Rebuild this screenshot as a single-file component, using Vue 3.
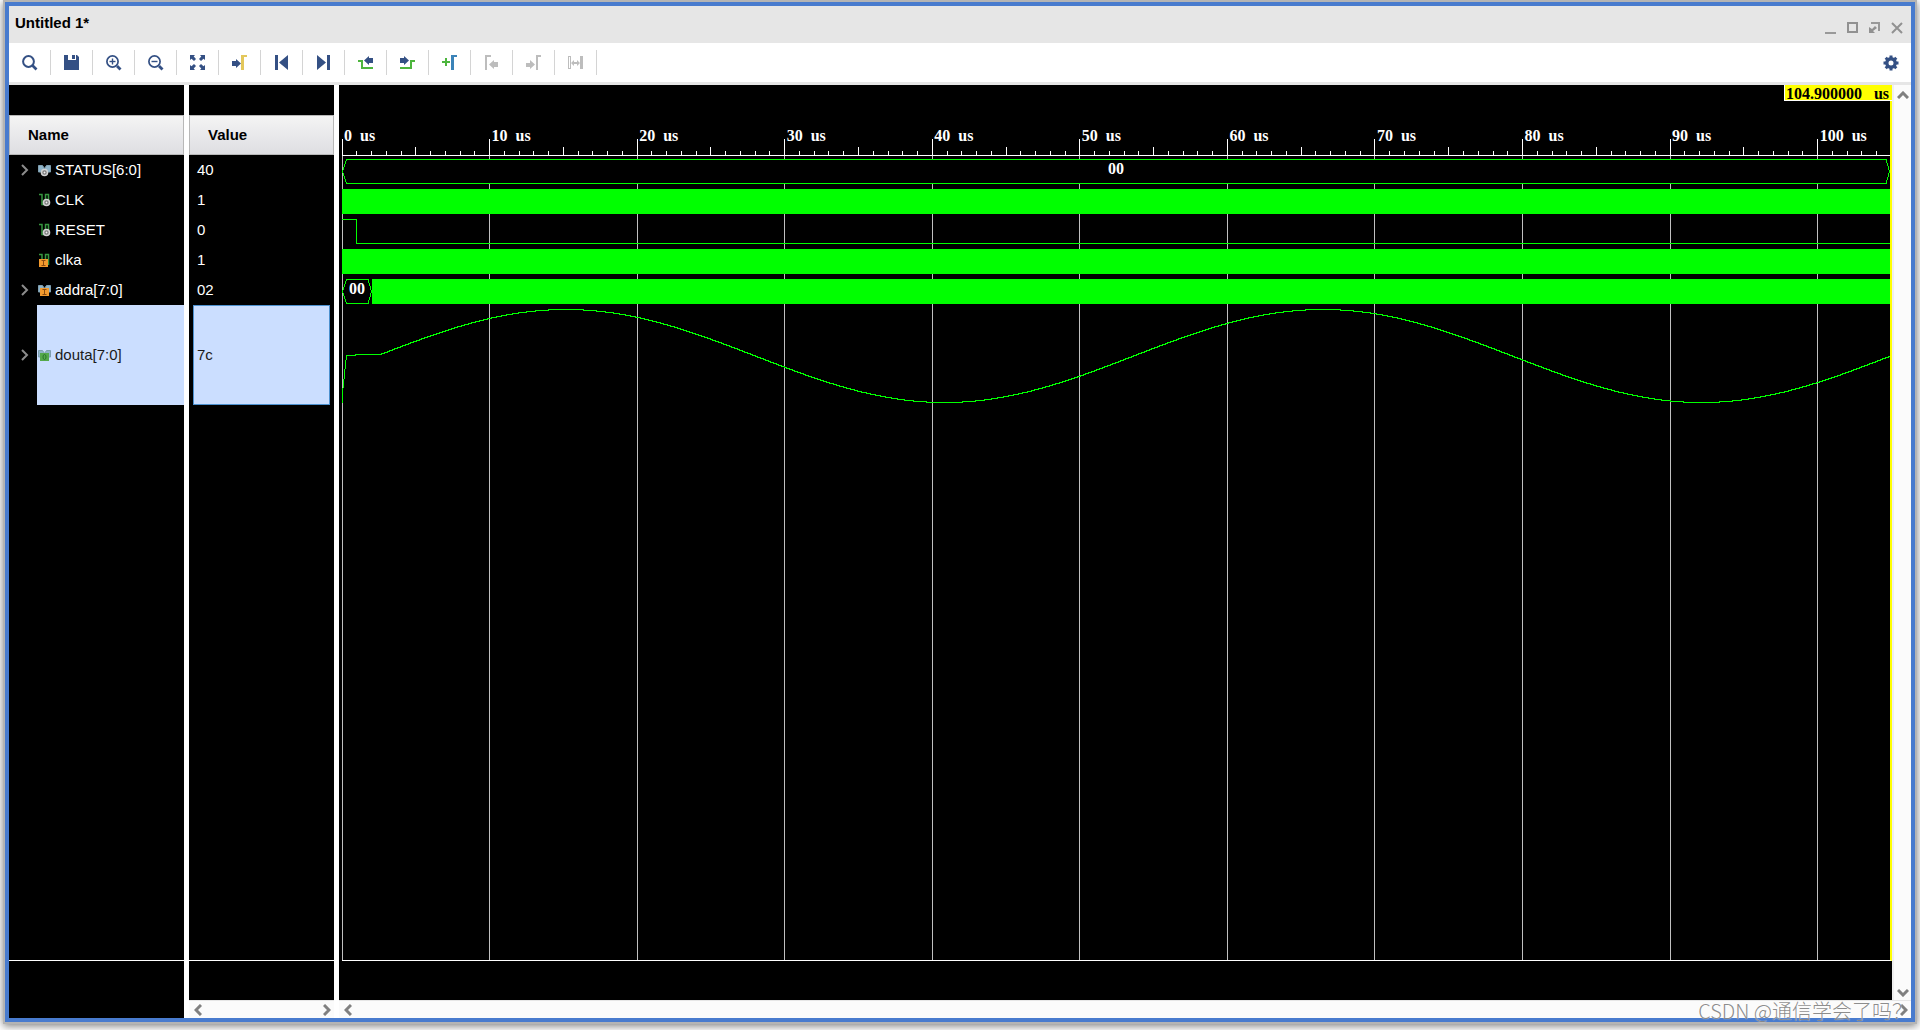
<script setup>
const SPAN = 104.9
const pct = (t) => `${(t / SPAN) * 100}%`

const majors = Array.from({ length: 11 }, (_, i) => i * 10)
const minors = Array.from({ length: 105 }, (_, i) => i).filter((t) => t % 10 !== 0)

const signals = [
  { name: 'STATUS[6:0]', value: '40', icon: 'bus', expand: true },
  { name: 'CLK', value: '1', icon: 'wire' },
  { name: 'RESET', value: '0', icon: 'wire' },
  { name: 'clka', value: '1', icon: 'wire-in' },
  { name: 'addra[7:0]', value: '02', icon: 'bus-in', expand: true },
  { name: 'douta[7:0]', value: '7c', icon: 'bus-out', expand: true, selected: true },
]

const tools = [
  'Search', 'Save', 'Zoom In', 'Zoom Out', 'Zoom Fit', 'Go to Cursor', 'Go to Time 0',
  'Go to Last Time', 'Previous Transition', 'Next Transition', 'Add Marker',
  'Previous Marker', 'Next Marker', 'Swap Cursors',
]

// Analog trace of douta, one sample per plot unit.
const samples = ['0.5,98', '0.5,88', '4.5,50.5', '13,50.5', '14,49.5', '39,49.5']
for (let x = 40; x <= 1548; x += 1) {
  const y = 51 - 46.5 * Math.cos((2 * Math.PI * (x - 224)) / 757)
  samples.push(`${x},${Math.floor(y) + 0.5}`)
}
const analog = samples.join(' ')
</script>

<template>
  <main class="page">
    <section class="window">
      <header class="titlebar">
        <h1>Untitled 1*</h1>
        <div class="controls">
          <button aria-label="Minimize"><svg width="12" height="12"><path d="M0 10h11v2H0z" fill="#999" /></svg></button>
          <button aria-label="Maximize"><svg width="12" height="12"><path d="M1 1h9v9H1z" fill="none" stroke="#919191" stroke-width="2" /></svg></button>
          <button aria-label="Float"><svg width="12" height="12"><path d="M2 1h8v8" fill="none" stroke="#999" stroke-width="2" /><path d="M0 5v6h6L4 9l4-3-2-2-3 3z" fill="#919191" /></svg></button>
          <button aria-label="Close"><svg width="12" height="12"><path d="M1 1l10 10M11 1L1 11" stroke="#919191" stroke-width="2" /></svg></button>
        </div>
      </header>

      <div class="toolbar">
        <button v-for="(tool, i) in tools" :key="tool" class="tool" :aria-label="tool" :disabled="i > 10">
          <svg width="16" height="16" viewBox="0 0 16 16">
            <g v-if="i === 0" fill="none" stroke="#345084">
              <circle cx="6.5" cy="6.5" r="5.4" stroke-width="2" />
              <path d="M10.5 10.5l4 4" stroke-width="2.6" />
            </g>
            <path v-else-if="i === 1" fill="#345084" fill-rule="evenodd" d="M0 0h4v5h8V0h1l2 2v13H0zM8 0h3v4H8z" />
            <g v-else-if="i === 2 || i === 3" fill="none" stroke="#345084">
              <circle cx="6.5" cy="6.5" r="5.6" stroke-width="1.7" />
              <path d="M11 11l3.5 3.5" stroke-width="2.8" />
              <path d="M3.5 6.5h6" stroke-width="1.4" />
              <path v-if="i === 2" d="M6.5 3.5v6" stroke-width="1.4" />
            </g>
            <path v-else-if="i === 4" fill="#345084" d="M0 0h5L3.700 1.500 6 4 4 6 1.500 3.700 0 5zM15 0v5l-1.500-1.300L11 6 9 4l2.300-2.500L10 0zM0 15v-5l1.500 1.300L4 9l2 2-2.300 2.500L5 15zM15 15h-5l1.300-1.500L9 11l2-2 2.500 2.300L15 10z" />
            <g v-else-if="i === 5">
              <path fill="#345084" d="M0 6h4V4l5 4.500L4 13v-2H0z" />
              <path fill="#e3c75b" d="M9 0h6v2h-3v13H9z" />
            </g>
            <path v-else-if="i === 6" fill="#345084" d="M1 0h3v15H1zM14 0v15L5 7.500z" />
            <path v-else-if="i === 7" fill="#345084" d="M1 0v15l9-7.500zM11 0h3v15h-3z" />
            <g v-else-if="i === 8">
              <path fill="none" stroke="#4db53d" stroke-width="2" d="M0 6h4v7h11" />
              <path fill="#345084" d="M15 3v5h-4v2L6 5.500 11 1v2z" />
            </g>
            <g v-else-if="i === 9">
              <path fill="none" stroke="#4db53d" stroke-width="2" d="M0 13h11V6h4" />
              <path fill="#345084" d="M0 3v5h4v2l5-4.500L4 1v2z" />
            </g>
            <g v-else-if="i === 10">
              <path fill="#4db53d" d="M0 6h3V3h2v3h3v2H5v3H3V8H0z" />
              <path fill="#3b83b8" d="M9 0h6v2h-3v13H9z" />
            </g>
            <path v-else-if="i === 11" fill="#bdbdbd" d="M1 0h6v2H3v13H1zM14 7v5h-4v2L5 9.500 10 5v2z" />
            <path v-else-if="i === 12" fill="#bdbdbd" d="M0 8v4h4v2l5-4.500L4 5v3zM10 0h5v2h-3v13h-2z" />
            <g v-else fill="#bdbdbd">
              <path fill-rule="evenodd" d="M0 1h3v13H0zM1 2v11h1V2zM12 1h3v13h-3z" />
              <path d="M3 8l3-3v2h3V5l3 3-3 3V9H6v2z" />
            </g>
          </svg>
        </button>
        <button class="settings" aria-label="Settings">
          <svg width="16" height="16" viewBox="0 0 16 16">
            <circle cx="8" cy="8" r="4.200" fill="none" stroke="#345084" stroke-width="3.400" />
            <path d="M8 .5v3M8 12.500v3M.5 8h3M12.500 8h3M2.700 2.700l2 2M11.300 11.300l2 2M13.300 2.700l-2 2M4.700 11.300l-2 2" stroke="#345084" stroke-width="3" />
          </svg>
        </button>
      </div>

      <div class="body">
        <div class="column names">
          <table>
            <thead><tr><th scope="col">Name</th></tr></thead>
            <tbody>
              <tr v-for="s in signals" :key="s.name" :class="{ selected: s.selected }">
                <td>
                  <div class="cell">
                    <span class="twist">
                      <button v-if="s.expand" :aria-label="'Expand ' + s.name">
                        <svg width="8" height="12"><path d="M1 1l5 5-5 5" fill="none" stroke="#8c8c8c" stroke-width="2" /></svg>
                      </button>
                    </span>
                    <span class="label">
                      <svg width="14" height="14" viewBox="0 0 14 14">
                        <path v-if="s.icon.startsWith('bus')" d="M.5 2.500h4l2 3 2-3h4V9H.5z" fill="#8fb4c9" stroke="#7f9fb0" />
                        <path v-else d="M1 1.500h3v10h2M7.500 12V1.500h3V12" fill="none" stroke="#36963f" stroke-width="1.500" />
                        <template v-if="s.icon === 'bus' || s.icon === 'wire'">
                          <circle :cx="s.icon === 'bus' ? 6.5 : 8.5" cy="9.500" r="3" fill="#777" stroke="#d2d2d2" stroke-width="1.600" />
                          <circle :cx="s.icon === 'bus' ? 6.5 : 8.5" cy="9.500" r="1" fill="#eee" />
                        </template>
                        <template v-else-if="s.icon === 'bus-out'">
                          <path d="M2 5h9v8H2z" fill="#55a94c" />
                          <ellipse cx="6.500" cy="9" rx="1.500" ry="2.500" fill="none" stroke="#28752b" />
                        </template>
                        <g v-else :transform="s.icon === 'wire-in' ? 'translate(-1 1)' : ''">
                          <path d="M2 5h9v8H2z" fill="#f39a2d" />
                          <path d="M4.500 6.500h4M6.500 6.500v5M4.500 11.500h4" stroke="#8a4b10" />
                        </g>
                      </svg>
                      {{ s.name }}
                    </span>
                  </div>
                </td>
              </tr>
            </tbody>
          </table>
          <div class="spacer"></div>
          <div class="tail tall"></div>
        </div>

        <div class="column values">
          <table>
            <thead><tr><th scope="col">Value</th></tr></thead>
            <tbody>
              <tr v-for="s in signals" :key="s.name" :class="{ selected: s.selected }">
                <td><div class="cell"><span class="val">{{ s.value }}</span></div></td>
              </tr>
            </tbody>
          </table>
          <div class="spacer"></div>
          <div class="tail"></div>
          <div class="hscroll">
            <button aria-label="Scroll left"><svg width="8" height="12"><path d="M7 1L2 6l5 5" /></svg></button>
            <button aria-label="Scroll right"><svg width="8" height="12"><path d="M1 1l5 5-5 5" /></svg></button>
          </div>
        </div>

        <div class="wave">
          <div class="wave-main">
            <div class="canvas">
              <div class="marker-row"><div class="marker"><span>104.900000</span><span>us</span></div></div>
              <div class="plot">
                <svg class="grid" aria-hidden="true">
                  <line v-for="t in majors" :key="t" :x1="pct(t)" :x2="pct(t)" y1="55" y2="100%" />
                </svg>
                <div class="ruler">
                  <svg class="ticks" aria-hidden="true">
                    <line x1="0" x2="100%" y1="54.500" y2="54.500" />
                    <line v-for="t in majors" :key="t" :x1="pct(t)" :x2="pct(t)" y1="38" y2="55" />
                    <line v-for="t in minors" :key="t" :x1="pct(t)" :x2="pct(t)" :y1="t % 5 ? 50 : 46" y2="55" />
                  </svg>
                  <span v-for="t in majors" :key="t" class="time" :style="{ left: pct(t) }">{{ t }}<span class="unit">us</span></span>
                </div>
                <div class="trace bus">
                  <svg class="end" width="5" height="30"><path d="M5 4.500H4.500L.5 16.500 4.500 28.500H5" /></svg>
                  <div class="mid">00</div>
                  <svg class="end" width="5" height="30"><path d="M0 4.500h1L4.500 16.500 1 28.500H0" /></svg>
                </div>
                <div class="trace"><div class="solid"></div></div>
                <div class="trace"><div class="high"></div><div class="low"></div></div>
                <div class="trace"><div class="solid"></div></div>
                <div class="trace bus">
                  <svg class="end" width="5" height="30"><path d="M5 4.500H4.500L.5 16.500 4.500 28.500H5" /></svg>
                  <div class="mid short">00</div>
                  <svg class="end" width="5" height="30"><path d="M0 4.500h1L4.500 16.500 1 28.500H0" /></svg>
                  <div class="solid"></div>
                </div>
                <svg class="analog" viewBox="0 0 1548 100" preserveAspectRatio="none">
                  <polyline :points="analog" vector-effect="non-scaling-stroke" />
                </svg>
              </div>
              <div class="foot"></div>
            </div>
            <div class="vscroll">
              <button aria-label="Scroll up"><svg width="12" height="8"><path d="M1 7l5-5 5 5" /></svg></button>
              <button aria-label="Scroll down"><svg width="12" height="8"><path d="M1 1l5 5 5-5" /></svg></button>
            </div>
          </div>
          <div class="hscroll">
            <button aria-label="Scroll left"><svg width="8" height="12"><path d="M7 1L2 6l5 5" /></svg></button>
            <button aria-label="Scroll right"><svg width="8" height="12"><path d="M1 1l5 5-5 5" /></svg></button>
          </div>
        </div>
      </div>
    </section>
    <div class="watermark">CSDN @通信学会了吗？</div>
  </main>
</template>

<style>
body { background: #fff; }
</style>

<style scoped>
* { box-sizing: border-box; }
svg { display: block; flex: none; }
button { padding: 0; border: 0; background: none; display: flex; align-items: center; justify-content: center; }
.page {
  position: relative;
  display: flex;
  min-height: 100vh;
  padding: 2px 5px 8px;
  overflow: hidden;
  font: 15px/20px "Liberation Sans", Arial, sans-serif;
  color: #000;
}
.window {
  flex: 1;
  min-width: 0;
  display: flex;
  flex-direction: column;
  border: 4px solid #487bce;
  box-shadow: 0 0 0 2px #b4b4b4, 0 2px 8px 2px rgba(0, 0, 0, 0.5);
  background: #fff;
}
.titlebar {
  display: flex;
  justify-content: space-between;
  height: 37px;
  padding: 0 8px 0 6px;
  background: #e6e6e6;
}
h1 { margin: 7px 0 0; font-size: 15px; line-height: 20px; }
.controls { display: flex; gap: 10px; align-items: center; padding-top: 6px; }
.toolbar { display: flex; align-items: center; height: 42px; border-bottom: 3px solid #e6e6e6; }
.tool { width: 42px; height: 25px; border-right: 1px solid #d4d4d4; }
.settings { margin-left: auto; width: 40px; height: 25px; }
.body { flex: 1; display: flex; gap: 5px; min-height: 0; }
.column { display: flex; flex-direction: column; background: #000; color: #fff; padding-top: 30px; }
.names { width: 175px; }
.values { width: 145px; }
table { width: 100%; border-collapse: separate; border-spacing: 0; }
th {
  height: 40px;
  padding: 0 18px;
  text-align: left;
  color: #000;
  border: 1px solid #b8b8b8;
  background: linear-gradient(#f4f4f4, #dedee2);
}
td { padding: 0; }
.cell { display: flex; height: 30px; }
.selected .cell { height: 100px; color: #1a1a1a; }
.twist { width: 28px; padding-left: 12px; display: flex; align-items: center; }
.label { flex: 1; display: flex; align-items: center; gap: 3px; padding-left: 1px; }
.selected .label { background: #cbdeff; }
.val { flex: 1; display: flex; align-items: center; margin: 0 4px; padding-left: 3px; border: 1px solid transparent; }
.selected .val { background: #cbdeff; border-color: #4d91cf; }
.spacer { flex: 1; border-bottom: 1px solid #fff; }
.tail { height: 39px; }
.tail.tall { height: 57px; }
.hscroll {
  display: flex;
  justify-content: space-between;
  height: 18px;
  padding: 1px 3px 0 5px;
  background: #fbfbfb;
  border-top: 1px solid #e6e6e6;
}
.hscroll path, .vscroll path { fill: none; stroke: #808080; stroke-width: 3; }
.wave { flex: 1; min-width: 0; display: flex; flex-direction: column; }
.wave-main { flex: 1; display: flex; }
.canvas { flex: 1; min-width: 0; display: flex; flex-direction: column; background: #000; }
.vscroll {
  display: flex;
  flex-direction: column;
  justify-content: space-between;
  align-items: center;
  width: 19px;
  padding: 6px 0 3px 1px;
  border-left: 2px solid #efefef;
  background: #fbfbfb;
}
.marker-row { display: flex; justify-content: flex-end; height: 16px; }
.marker, .time, .mid { font: bold 16px/16px "Liberation Serif", "Times New Roman", serif; }
.marker { display: flex; gap: 12px; padding: 1px 3px 0 1px; background: #ff0; border: solid #fff; border-width: 0 0 1px 1px; }
.unit { margin-left: 8px; }
.plot {
  position: relative;
  flex: 1;
  margin-left: 3px;
  border-right: 2px solid #ff0;
  border-bottom: 1px solid #fff;
  color: #fff;
}
.grid, .ticks { position: absolute; inset: 0; width: 100%; height: 100%; overflow: visible; shape-rendering: crispEdges; }
.grid { stroke: #c0c0c0; }
.ticks { stroke: #fff; }
.ruler { position: relative; height: 54px; }
.time { position: absolute; top: 27px; padding-left: 2px; white-space: nowrap; }
.trace { position: relative; display: flex; height: 30px; }
.solid { flex: 1; height: 25px; margin-top: 4px; background: #0f0; }
.high { width: 14px; height: 25px; margin-top: 4px; border-top: 1px solid #0f0; }
.low { flex: 1; height: 25px; margin-top: 4px; border: solid #0f0; border-width: 0 0 1px 1px; }
.end { fill: #000; stroke: #0f0; shape-rendering: crispEdges; }
.mid { flex: 1; height: 25px; margin-top: 4px; padding-top: 1px; text-align: center; background: #000; border: solid #0f0; border-width: 1px 0; }
.mid.short { flex: none; width: 20px; }
.analog { width: 100%; height: 100px; fill: none; stroke: #0f0; shape-rendering: crispEdges; position: relative; }
.foot { height: 39px; }
.watermark {
  position: absolute;
  right: 8px;
  bottom: 6px;
  font: 300 20px/26px "Noto Sans CJK SC", sans-serif;
  color: rgba(110, 110, 110, 0.8);
  text-shadow: 0 0 1px #fff;
  pointer-events: none;
}
</style>
